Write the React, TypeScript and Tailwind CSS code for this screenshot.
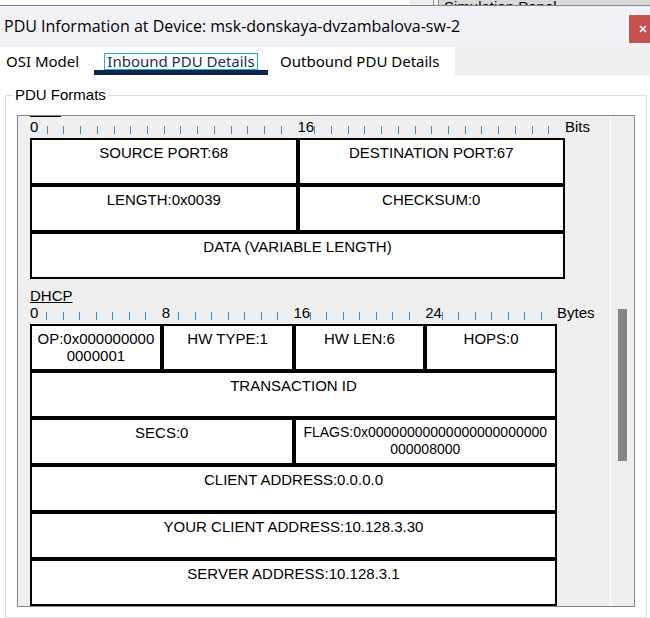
import React from "react";

type Field = { text: string; span: number; small?: boolean };

const UDP_ROWS: Field[][] = [
  [
    { text: "SOURCE PORT:68", span: 2 },
    { text: "DESTINATION PORT:67", span: 2 },
  ],
  [
    { text: "LENGTH:0x0039", span: 2 },
    { text: "CHECKSUM:0", span: 2 },
  ],
  [{ text: "DATA (VARIABLE LENGTH)", span: 4 }],
];

const DHCP_ROWS: Field[][] = [
  [
    { text: "OP:0x000000000\n0000001", span: 1 },
    { text: "HW TYPE:1", span: 1 },
    { text: "HW LEN:6", span: 1 },
    { text: "HOPS:0", span: 1 },
  ],
  [{ text: "TRANSACTION ID", span: 4 }],
  [
    { text: "SECS:0", span: 2 },
    { text: "FLAGS:0x00000000000000000000000\n000008000", span: 2, small: true },
  ],
  [{ text: "CLIENT ADDRESS:0.0.0.0", span: 4 }],
  [{ text: "YOUR CLIENT ADDRESS:10.128.3.30", span: 4 }],
  [{ text: "SERVER ADDRESS:10.128.3.1", span: 4 }],
];

function Ruler({ step }: { step: number }) {
  return (
    <div className="grid h-[21px] min-w-0 flex-1 grid-cols-[repeat(32,minmax(0,1fr))] items-end pb-1">
      {Array.from({ length: 32 }, (_, i) =>
        i % step === 0 ? (
          <span key={i} className="whitespace-nowrap leading-[14px]">
            {i}
          </span>
        ) : (
          <span key={i} className="h-2 border-l border-[#3c8ccd]" />
        ),
      )}
    </div>
  );
}

function FieldTable({ rows, label }: { rows: Field[][]; label: string }) {
  return (
    <table aria-label={label} className="w-full table-fixed border-separate border-spacing-0 border-0 bg-white">
      <colgroup>
        <col />
        <col />
        <col />
        <col />
      </colgroup>
      <tbody>
        {rows.map((row, r) => (
          <tr key={r}>
            {row.map((f) => (
              <td
                key={f.text}
                colSpan={f.span}
                className={`h-[47px] whitespace-pre border-2 border-black px-0 pb-0 pt-1 text-center align-top leading-[17px] ${
                  f.small ? "text-[14px]" : "text-[15px]"
                }`}
              >
                {f.text}
              </td>
            ))}
          </tr>
        ))}
      </tbody>
    </table>
  );
}

export default function App() {
  return (
    <div className="w-full bg-white font-['Liberation_Sans',Arial,sans-serif] text-[15px] text-black">
      <div className="flex h-[5px] justify-end overflow-hidden">
        <div className="w-[23px] bg-[#eeeeee]" />
        <div className="w-[6px] border-x border-[#8a8a8a] bg-[#eeeeee]" />
        <div className="w-[211px] bg-[#d9d9d9] pl-[5px] leading-[14px]">Simulation Panel</div>
      </div>

      <header className="flex h-[42px] items-center justify-between border-t border-[#82828a] bg-[#f1f2f8]">
        <h1 className="whitespace-nowrap pb-[2px] pl-1 font-['Open_Sans',sans-serif] text-[16px] leading-5">
          PDU Information at Device: msk-donskaya-dvzambalova-sw-2
        </h1>
        <button aria-label="Close" className="mt-[5px] flex h-7 w-[21px] items-center justify-end bg-[#c75050] pr-[3px]">
          <svg viewBox="0 0 8 8" className="h-2 w-2" stroke="white" strokeWidth="1.7">
            <path d="M1 1L7 7M7 1L1 7" />
          </svg>
        </button>
      </header>

      <div role="tablist" className="flex h-7 bg-[#efefef] font-['Noto_Sans',sans-serif] text-[15px] leading-[15px]">
        <button role="tab" aria-selected="false" className="w-[94px] whitespace-nowrap bg-white pl-[6px] text-left">
          OSI Model
        </button>
        <button
          role="tab"
          aria-selected="true"
          className="flex w-[174px] items-end justify-center whitespace-nowrap border-b-[5px] border-[#0c2548] bg-white text-[#1b2d57]"
        >
          <span className="border border-[#16b4e6] px-[2px]">Inbound PDU Details</span>
        </button>
        <button role="tab" aria-selected="false" className="w-[187px] whitespace-nowrap bg-white pl-3 text-left">
          Outbound PDU Details
        </button>
      </div>

      <fieldset className="ml-[5px] mr-[3px] mt-[11px] border border-[#dcdcdc] px-[11px] pb-[10px]">
        <legend className="-ml-1 px-[2px] leading-[18px]">PDU Formats</legend>
        <div className="mt-[11px] flex border border-[#84888e] bg-[#efefef]">
          <div className="min-w-0 flex-1 pl-3">
            <div className="h-px w-[31px] bg-black" />
            <div className="flex">
              <Ruler step={16} />
              <span className="w-[45px] leading-5">Bits</span>
            </div>
            <div className="mr-[45px]">
              <FieldTable rows={UDP_ROWS} label="UDP" />
            </div>
            <h2 className="mt-[10px] leading-[14px] underline">DHCP</h2>
            <div className="flex">
              <Ruler step={8} />
              <span className="w-[53px] leading-5">Bytes</span>
            </div>
            <div className="mr-[53px]">
              <FieldTable rows={DHCP_ROWS} label="DHCP" />
            </div>
          </div>
          <div className="w-6 border-l border-white pl-[7px] pt-[193px]">
            <div className="h-[152px] w-[9px] bg-[#858585]" />
          </div>
        </div>
      </fieldset>
    </div>
  );
}
